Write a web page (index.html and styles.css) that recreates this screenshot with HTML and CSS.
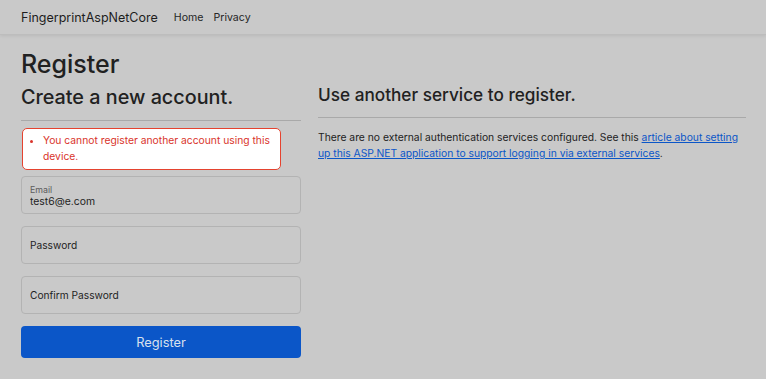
FILE: index.html
```html
<!DOCTYPE html>
<html>
  <head>
    <title>Register - FingerprintAspNetCore</title>
    <link rel="stylesheet" href="styles.css">
  </head>
  <body>
    <header class="navbar">
      <a class="brand" href="#">FingerprintAspNetCore</a>
      <nav class="nav-links">
        <a href="#">Home</a>
        <a href="#">Privacy</a>
      </nav>
    </header>

    <main class="page">
      <h1>Register</h1>
      <div class="row">
        <div class="col-form">
          <form>
            <h2>Create a new account.</h2>
            <hr />
            <div class="validation-summary">
              <ul>
                <li>You cannot register another account using this device.</li>
              </ul>
            </div>
            <div class="form-floating">
              <label>Email</label>
              <input type="email" value="test6@e.com" />
            </div>
            <div class="form-floating empty">
              <input type="password" placeholder="Password" />
            </div>
            <div class="form-floating empty">
              <input type="password" placeholder="Confirm Password" />
            </div>
            <button type="submit" class="btn-register">Register</button>
          </form>
        </div>

        <div class="col-external">
          <section>
            <h3>Use another service to register.</h3>
            <hr />
            <p>
              There are no external authentication services configured. See this
              <a href="#">article about setting up this ASP.NET application to support logging in via external services</a>.
            </p>
          </section>
        </div>
      </div>
    </main>
  </body>
</html>
```

FILE: styles.css
```css
body {
  margin: 0;
  font-family: Inter, "Liberation Sans", sans-serif;
  background-color: #c9c9c9;
  color: #212121;
}
.navbar {
  display: flex;
  align-items: center;
  height: 34px;
  padding: 0 21px;
  border-bottom: 1px solid #bdbdbd;
  box-shadow: 0 1px 3px rgba(0, 0, 0, 0.08);
}
.brand {
  font-size: 12.5px;
  color: #1d1d1d;
  text-decoration: none;
  margin-right: 16px;
}
.nav-links {
  display: flex;
  gap: 10px;
}
.nav-links a {
  font-size: 10.6px;
  color: #262626;
  text-decoration: none;
}
.page {
  padding: 14px 20px 0 21px;
}
h1 {
  font-size: 25px;
  font-weight: 500;
  margin: 0 0 4px;
  line-height: 30px;
}
.row {
  display: flex;
  gap: 17px;
}
.col-form {
  width: 280px;
}
.col-external {
  flex: 1;
}
h2 {
  font-size: 19.8px;
  font-weight: 500;
  margin: 0;
  line-height: 28px;
}
h3 {
  font-size: 17.2px;
  font-weight: 500;
  margin: 0;
  line-height: 24px;
}
hr {
  border: none;
  border-top: 1px solid #a9a9a9;
  margin: 9px 0 7px;
}
.col-external hr {
  margin: 10px 0 7px;
}
.validation-summary {
  box-sizing: border-box;
  margin-left: 1px;
  width: 259px;
  height: 42px;
  background: #fff;
  border: 1.5px solid #e5432f;
  border-radius: 5px;
  color: #d9342b;
  font-size: 10.3px;
  line-height: 16px;
  padding: 3px 6px 3px 0;
  margin-bottom: 6px;
}
.validation-summary ul {
  margin: 0;
  padding-left: 20px;
}
.form-floating {
  box-sizing: border-box;
  height: 38px;
  border: 1px solid #b3b3b3;
  border-radius: 4px;
  margin-bottom: 12px;
  padding: 0 8px;
  display: flex;
  flex-direction: column;
  justify-content: center;
}
.form-floating label {
  font-size: 8.8px;
  color: #5c5c5c;
  line-height: 11px;
  margin-top: 1px;
}
.form-floating input {
  border: none;
  background: transparent;
  font-family: inherit;
  font-size: 10.4px;
  color: #1e1e1e;
  padding: 0;
  outline: none;
}
.form-floating.empty input {
  font-size: 10.2px;
}
.form-floating.empty input::placeholder {
  color: #1e1e1e;
}
.btn-register {
  width: 100%;
  height: 32px;
  background: #0b56c8;
  border: none;
  border-radius: 4px;
  color: #d9e1ee;
  font-family: inherit;
  font-size: 12.8px;
  cursor: pointer;
}
p {
  font-size: 10.3px;
  line-height: 16px;
  margin: 11px 0 0;
  color: #222;
}
p a {
  color: #0b56c8;
}
```
